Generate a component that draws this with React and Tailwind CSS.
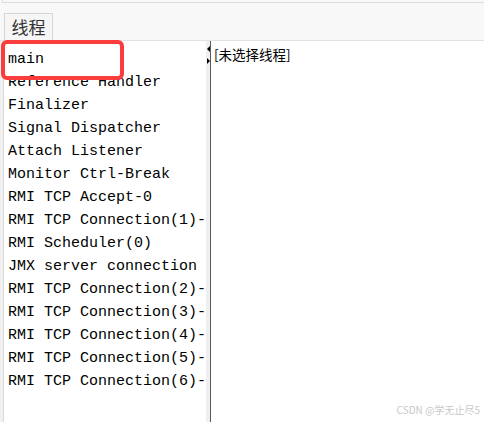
export default function App() {
  const threads = [
    'main',
    'Reference Handler',
    'Finalizer',
    'Signal Dispatcher',
    'Attach Listener',
    'Monitor Ctrl-Break',
    'RMI TCP Accept-0',
    'RMI TCP Connection(1)-',
    'RMI Scheduler(0)',
    'JMX server connection',
    'RMI TCP Connection(2)-',
    'RMI TCP Connection(3)-',
    'RMI TCP Connection(4)-',
    'RMI TCP Connection(5)-',
    'RMI TCP Connection(6)-',
  ]

  return (
    <div className="relative w-[484px] h-[422px] overflow-hidden bg-[#f8f8f8] font-['Liberation_Sans','Noto_Sans_CJK_SC',sans-serif]">
      {/* top panel edge */}
      <div className="h-[3px] ml-[2px] border-l border-b border-[#dcdcdc]" />

      {/* tab strip */}
      <div className="h-[38px] px-[4px] pt-[10px] flex items-end border-b border-[#e2e2e2]">
        <div className="w-[49px] h-[27px] border border-b-0 border-[#d6d6d6] bg-[#f6f6f6] flex items-center justify-center text-[17px] text-[#333] font-['Noto_Sans_CJK_SC',sans-serif]">
          线程
        </div>
      </div>

      {/* split pane */}
      <div className="flex h-[381px]">
        <div className="w-[4px] bg-[#f1f1f1] border-r border-[#d8d8d8]" />
        <div className="w-[202px] bg-white overflow-hidden pt-[7px] pl-[4px]">
          {threads.map((t) => (
            <div
              key={t}
              className="h-[23px] leading-[23px] whitespace-nowrap text-[15px] text-black font-['Liberation_Mono',monospace]"
            >
              {t}
            </div>
          ))}
        </div>
        <div className="relative w-[4px] bg-[#efefef]">
          <div className="absolute left-[1px] top-[5px] w-0 h-0 border-y-[3px] border-y-transparent border-r-[3px] border-r-black" />
          <div className="absolute left-[1px] top-[17px] w-0 h-0 border-y-[3px] border-y-transparent border-l-[3px] border-l-black" />
        </div>
        <div className="w-[1px] bg-[#5a5a5a]" />
        <div className="flex-1 bg-white pl-[3px] pt-[5px]">
          <div className="text-[13.5px] leading-[16px] text-black font-['Noto_Sans_CJK_SC',sans-serif]">
            [未选择线程]
          </div>
        </div>
      </div>

      {/* annotation box */}
      <div className="absolute left-[1px] top-[40px] w-[123px] h-[40px] border-[4px] border-[#fb3c3c] rounded-[6px]" />

      {/* watermark */}
      <div className="absolute right-[4px] bottom-[5px] text-[10px] text-[#c8c8c8] font-['Noto_Sans_CJK_SC',sans-serif]">
        CSDN @学无止尽5
      </div>
    </div>
  )
}
